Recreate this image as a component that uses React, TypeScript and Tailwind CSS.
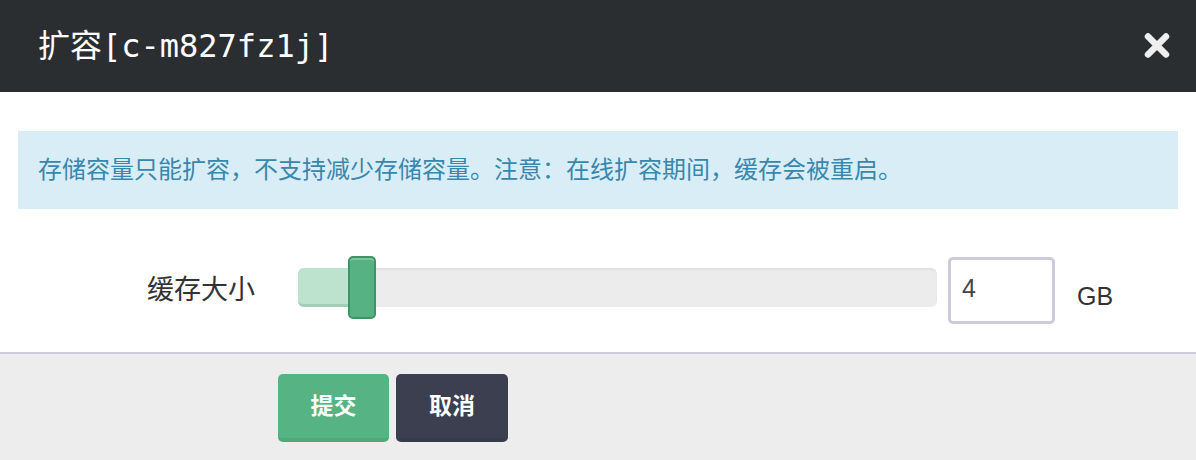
import React from 'react';

const SANS = { fontFamily: '"Liberation Sans", "Noto Sans CJK SC", sans-serif' };
const MONO = { fontFamily: '"DejaVu Sans Mono", "Noto Sans CJK SC", monospace' };

export default function App() {
  return (
    <div className="w-[1196px] h-[460px] bg-white flex flex-col" style={SANS}>
      <div className="h-[92px] bg-[#2b2e30] flex items-center justify-between pl-[38px] pr-[26px] shrink-0">
        <h2 className="text-[32px] text-white leading-none" style={MONO}>
          扩容[c-m827fz1j]
        </h2>
        <svg width="26" height="27" viewBox="0 0 26 27" className="mb-[2px]">
          <path d="M4 4.5 L22 22.5 M22 4.5 L4 22.5" stroke="#efefef" strokeWidth="6.5" strokeLinecap="round" />
        </svg>
      </div>

      <div className="flex-1 flex flex-col px-[18px] pt-[39px]">
        <div className="h-[78px] bg-[#d9edf7] text-[#3a87ad] text-[24px] pl-[20px] flex items-center">
          存储容量只能扩容，不支持减少存储容量。注意：在线扩容期间，缓存会被重启。
        </div>

        <div className="flex items-center mt-[47px] h-[69px]">
          <label className="w-[262px] text-right pr-[25px] text-[27px] text-[#333]">缓存大小</label>
          <div className="relative w-[639px] h-[39px] ml-[18px] mb-[6px] rounded-[6px] bg-[#ececec] shadow-[inset_0_2px_2px_rgba(0,0,0,0.05)]">
            <div className="absolute left-0 top-0 h-full w-[60px] rounded-l-[6px] bg-[#bde3cf] border-b-[3px] border-[#a3cdb6]" />
            <div className="absolute left-[50px] top-[-12px] w-[28px] h-[63px] rounded-[5px] bg-[#56b283] border-2 border-[#3f9466] shadow-[inset_0_2px_0_rgba(255,255,255,0.25)]" />
          </div>
          <div className="ml-[11px] w-[107px] h-[67px] border-[3px] border-[#cccbdb] rounded-[5px] flex items-center pl-[11px] pb-[4px] text-[25px] text-[#444]">
            4
          </div>
          <span className="ml-[22px] mt-[12px] text-[25px] text-[#333]">GB</span>
        </div>
      </div>

      <div className="h-[108px] shrink-0 border-t-2 border-[#cdcadb] bg-[#ededed] pl-[278px] pt-[20px] flex gap-[7px]">
        <button className="w-[111px] h-[68px] rounded-[5px] bg-[#56b383] border-b-[4px] border-[#4ea878] text-white font-bold text-[23px]">
          提交
        </button>
        <button className="w-[112px] h-[68px] rounded-[5px] bg-[#3c3f4f] border-b-[4px] border-[#383b4a] text-white font-bold text-[23px]">
          取消
        </button>
      </div>
    </div>
  );
}
